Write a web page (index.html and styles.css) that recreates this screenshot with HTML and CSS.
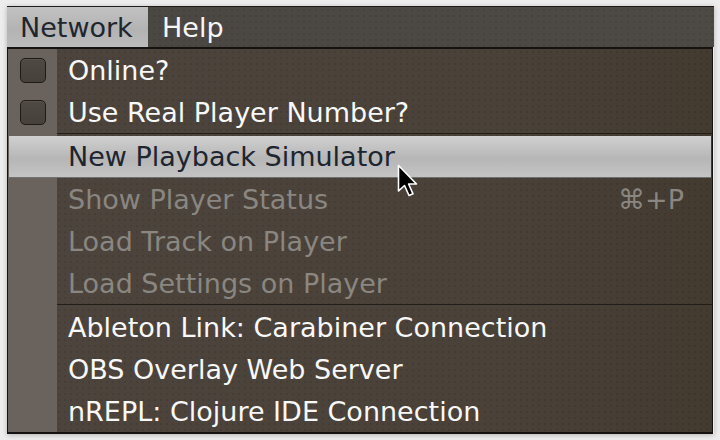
FILE: index.html
```html
<!DOCTYPE html>
<html>
<head>
<meta charset="utf-8">
<link rel="stylesheet" href="styles.css">
</head>
<body>
<div class="window">
  <div class="menubar">
    <span class="title active">Network</span>
    <span class="title">Help</span>
  </div>
  <div class="popup">
    <div class="item"><span class="gutter"><span class="check"></span></span><span class="label">Online?</span></div>
    <div class="item"><span class="gutter"><span class="check"></span></span><span class="label">Use Real Player Number?</span></div>
    <div class="sep sep-a"></div>
    <div class="item hover"><span class="gutter"></span><span class="label">New Playback Simulator</span></div>
    <div class="item disabled"><span class="gutter"></span><span class="label">Show Player Status</span><span class="key">⌘+P</span></div>
    <div class="item disabled"><span class="gutter"></span><span class="label">Load Track on Player</span></div>
    <div class="item disabled"><span class="gutter"></span><span class="label">Load Settings on Player</span></div>
    <div class="sep"></div>
    <div class="item"><span class="gutter"></span><span class="label">Ableton Link: Carabiner Connection</span></div>
    <div class="item"><span class="gutter"></span><span class="label">OBS Overlay Web Server</span></div>
    <div class="item"><span class="gutter"></span><span class="label">nREPL: Clojure IDE Connection</span></div>
  </div>
  <svg class="cursor" width="22" height="34" viewBox="0 0 22 34">
    <path d="M1.5 1.5 L1.5 27 L7.5 21.5 L12 31.5 L16 29.8 L11.6 20 L19.5 20 Z" fill="#000" stroke="#fff" stroke-width="1.6" stroke-linejoin="round"/>
  </svg>
</div>
</body>
</html>
```

FILE: styles.css
```css
html, body {
  margin: 0;
  padding: 0;
  background: #ededed;
  width: 720px;
  height: 440px;
  overflow: hidden;
}

.window {
  position: relative;
  margin: 6px 0 0 7px;
  width: 707px;
  font-family: "DejaVu Sans", "Liberation Sans", sans-serif;
  font-size: 27px;
  box-shadow: 0 1px 5px rgba(0, 0, 0, 0.25);
}

.menubar {
  display: flex;
  height: 40px;
  border-top: 1px solid #1e1b18;
  background:
    radial-gradient(circle, rgba(0, 0, 0, 0.08) 0.8px, transparent 1.3px) 0 0 / 6px 6px,
    linear-gradient(to right, #4a4641, #4d4944);
}

.title {
  display: flex;
  align-items: center;
  color: #f6f6f6;
  padding: 0 14px;
}

.title.active {
  width: 141px;
  box-sizing: border-box;
  padding-left: 13px;
  color: #1e2630;
  background: linear-gradient(#c2c2c2, #b3b3b3 55%, #bcbcbc);
}

.popup {
  width: 706px;
  box-sizing: border-box;
  border: 1px solid #15120f;
  border-top-width: 2px;
  border-bottom-width: 2px;
  background:
    linear-gradient(to right, #6a635d 49px, transparent 49px),
    radial-gradient(circle, rgba(0, 0, 0, 0.09) 0.8px, transparent 1.3px) 0 0 / 6px 6px,
    linear-gradient(to right, #4d453d, #4a4239 70%, #433a30);
}

.item {
  display: flex;
  align-items: center;
  height: 42px;
  box-sizing: border-box;
  color: #f8f8f8;
}

.gutter {
  width: 49px;
  flex: none;
  display: flex;
  justify-content: center;
  align-items: center;
}

.check {
  width: 26px;
  height: 25px;
  box-sizing: border-box;
  border: 1px solid #1d1a17;
  border-radius: 5px;
  background: linear-gradient(#4f4944, #47413c);
  box-shadow: inset 0 1px 0 rgba(255, 255, 255, 0.06);
  margin-left: 1px;
}

.label {
  padding-left: 11px;
  flex: 1;
  white-space: nowrap;
}

.key {
  padding-right: 28px;
  color: #8a8681;
}

.item.disabled {
  color: #8a8681;
}

.item.hover {
  margin: 0 1px;
  color: #1c2530;
  border-bottom: 1px solid #707070;
  background: linear-gradient(#d0d0d0, #c2c2c2 30%, #b6b6b6 55%, #c4c4c4);
}

.item.hover .gutter {
  width: 48px;
}

.sep {
  height: 2px;
  margin-left: 49px;
  box-sizing: border-box;
  border-top: 1px solid #211d19;
}

.sep-a {
  height: 3px;
}

.cursor {
  position: absolute;
  left: 390px;
  top: 158px;
}
```
